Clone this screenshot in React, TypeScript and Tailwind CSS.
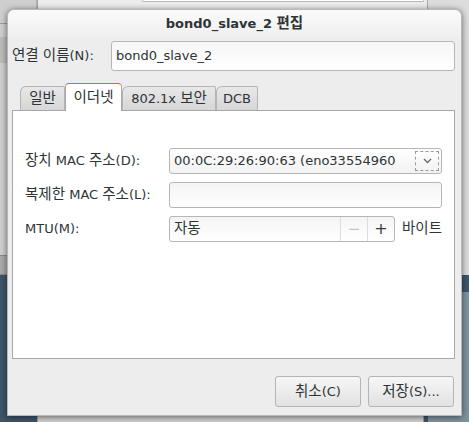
import React from "react";

const font = { fontFamily: '"DejaVu Sans", "Noto Sans CJK KR", sans-serif' };

// hangul glyphs in the reference render a bit larger than the latin ones
const T = ({ s }: { s: string }) => (
  <span className="whitespace-pre">
    {s.split(/([\uAC00-\uD7A3]+)/).map((part, i) =>
      /[\uAC00-\uD7A3]/.test(part) ? (
        <span key={i} className="text-[14.5px] leading-none">
          {part}
        </span>
      ) : (
        <span key={i}>{part}</span>
      )
    )}
  </span>
);

const Tab = ({ label, active, w }: { label: string; active?: boolean; w: string }) => (
  <div
    className={
      active
        ? `${w} h-[28px] -mb-px z-10 flex items-center justify-center rounded-t-[4px] border border-b-0 border-[#a8a8a8] border-t-[#4a90d9] bg-white text-[13px] text-[#2e3436]`
        : `${w} h-[24px] flex items-center justify-center rounded-tl-[6px] rounded-tr-[2px] border border-b-0 border-[#b4b4b4] bg-gradient-to-b from-[#e8e8e8] to-[#d6d6d6] text-[13px] text-[#2e3436]`
    }
  >
    <T s={label} />
  </div>
);

const App = () => {
  return (
    <div className="relative w-[469px] h-[422px] overflow-hidden bg-[#d4d4d4]" style={font}>
      {/* desktop behind the dialog */}
      <div className="absolute left-0 top-0 w-[37px] h-[255px] bg-[#cfcfcf] border-r border-[#b0b0b0]" />
      <div className="absolute left-0 top-[23px] w-[37px] h-px bg-[#9a9a9a]" />
      <div className="absolute left-0 top-[37px] w-[8px] h-[26px] bg-[#bcbcbc]" />
      <div className="absolute left-[37px] top-0 w-[391px] h-[9px] bg-[#ececec] border-x border-[#a8a8a8]" />
      <div className="absolute left-[142px] top-0 w-[282px] h-[2px] bg-white border-b border-x border-[#b8b8b8] rounded-b-[3px]" />
      <div className="absolute left-[428px] top-0 w-[41px] h-[292px] bg-[#dcdcdc]" />
      <div className="absolute left-0 top-[255px] w-[37px] h-[20px] bg-[#a9a9a9] border-y border-[#8a8a8a]" />
      <div className="absolute left-0 top-[275px] w-[469px] h-[147px] bg-[#3d5568]" />
      <div className="absolute left-[428px] top-[292px] w-[41px] h-[130px] bg-[#7f949e]" />
      <div className="absolute left-[37px] top-[300px] w-[387px] h-[122px] bg-[#cfcfcf] border-x border-[#9a9a9a]" />

      {/* dialog window */}
      <div className="absolute left-[7px] top-[9px] w-[455px] h-[407px] flex flex-col rounded-t-[7px] bg-[#ededed] shadow-[0_1px_6px_rgba(0,0,0,0.55)] border border-[#b8b8b8]">
        <div className="h-[27px] flex items-center justify-center rounded-t-[7px] bg-gradient-to-b from-[#fbfbfb] to-[#efefef] text-[13px] font-bold text-[#2e3436]">
          <T s="bond0_slave_2 편집" />
        </div>

        <div className="flex flex-col pl-[4px] pr-[6px] pt-[4px]">
          <div className="flex items-center h-[30px]">
            <span className="w-[99px] text-[13px] text-[#2e3436] whitespace-nowrap">
              <T s="연결 이름(N):" />
            </span>
            <div className="flex-1 h-[30px] flex items-center px-[4px] rounded-[3px] border border-[#b6b6b6] bg-gradient-to-b from-[#f6f6f6] to-white text-[13px] text-[#2e3436]">
              bond0_slave_2
            </div>
          </div>

          <div className="flex items-end h-[39px] pl-[8px]">
            <Tab label="일반" w="w-[45px]" />
            <Tab label="이더넷" w="w-[57px]" active />
            <Tab label="802.1x 보안" w="w-[94px]" />
            <Tab label="DCB" w="w-[42px]" />
          </div>

          <div className="h-[249px] flex flex-col bg-white border border-[#a8a8a8] pt-[37px] pl-[12px] pr-[12px] gap-[8px]">
            <div className="flex items-center h-[26px]">
              <span className="w-[144px] text-[13px] text-[#2e3436] whitespace-nowrap">
                <T s="장치 MAC 주소(D):" />
              </span>
              <div className="flex-1 h-[26px] flex items-center justify-between pl-[4px] pr-[2px] rounded-[3px] border border-[#b6b6b6] bg-gradient-to-b from-white to-[#f2f2f2] text-[13px] text-[#2e3436]">
                <span className="whitespace-nowrap overflow-hidden">00:0C:29:26:90:63 (eno33554960</span>
                <div className="w-[24px] h-[20px] shrink-0 flex items-center justify-center border border-dashed border-[#9a9a9a] text-[#555]">
                  <svg width="9" height="6" viewBox="0 0 9 6">
                    <path d="M1 1 L4.5 4.5 L8 1" fill="none" stroke="#666" strokeWidth="1.3" />
                  </svg>
                </div>
              </div>
            </div>
            <div className="flex items-center h-[26px]">
              <span className="w-[144px] text-[13px] text-[#2e3436] whitespace-nowrap">
                <T s="복제한 MAC 주소(L):" />
              </span>
              <div className="flex-1 h-[26px] rounded-[3px] border border-[#b6b6b6] bg-gradient-to-b from-[#f4f4f4] to-white" />
            </div>
            <div className="flex items-center h-[26px]">
              <span className="w-[144px] text-[13px] text-[#2e3436]">MTU(M):</span>
              <div className="w-[226px] h-[26px] flex rounded-[3px] border border-[#b6b6b6] bg-gradient-to-b from-[#f4f4f4] to-white text-[13px] text-[#2e3436]">
                <span className="flex-1 flex items-center pl-[4px]">
                  <T s="자동" />
                </span>
                <span className="w-[27px] flex items-center justify-center border-l border-[#dcdcdc] text-[#c4c4c4] text-[15px]">−</span>
                <span className="w-[27px] flex items-center justify-center border-l border-[#dcdcdc] text-[#3a3a3a] text-[16px]">+</span>
              </div>
              <span className="ml-[7px] text-[13px] text-[#2e3436]">
                <T s="바이트" />
              </span>
            </div>
          </div>

          <div className="flex justify-end gap-[7px] mt-[17px] pr-[1px]">
            <button className="w-[86px] h-[31px] rounded-[3px] border border-[#b4b4b4] bg-gradient-to-b from-[#f6f6f6] to-[#e2e2e2] text-[13px] text-[#2e3436]">
              <T s="취소(C)" />
            </button>
            <button className="w-[86px] h-[31px] rounded-[3px] border border-[#b4b4b4] bg-gradient-to-b from-[#f6f6f6] to-[#e2e2e2] text-[13px] text-[#2e3436]">
              <T s="저장(S)..." />
            </button>
          </div>
        </div>
      </div>
    </div>
  );
};

export default App;
